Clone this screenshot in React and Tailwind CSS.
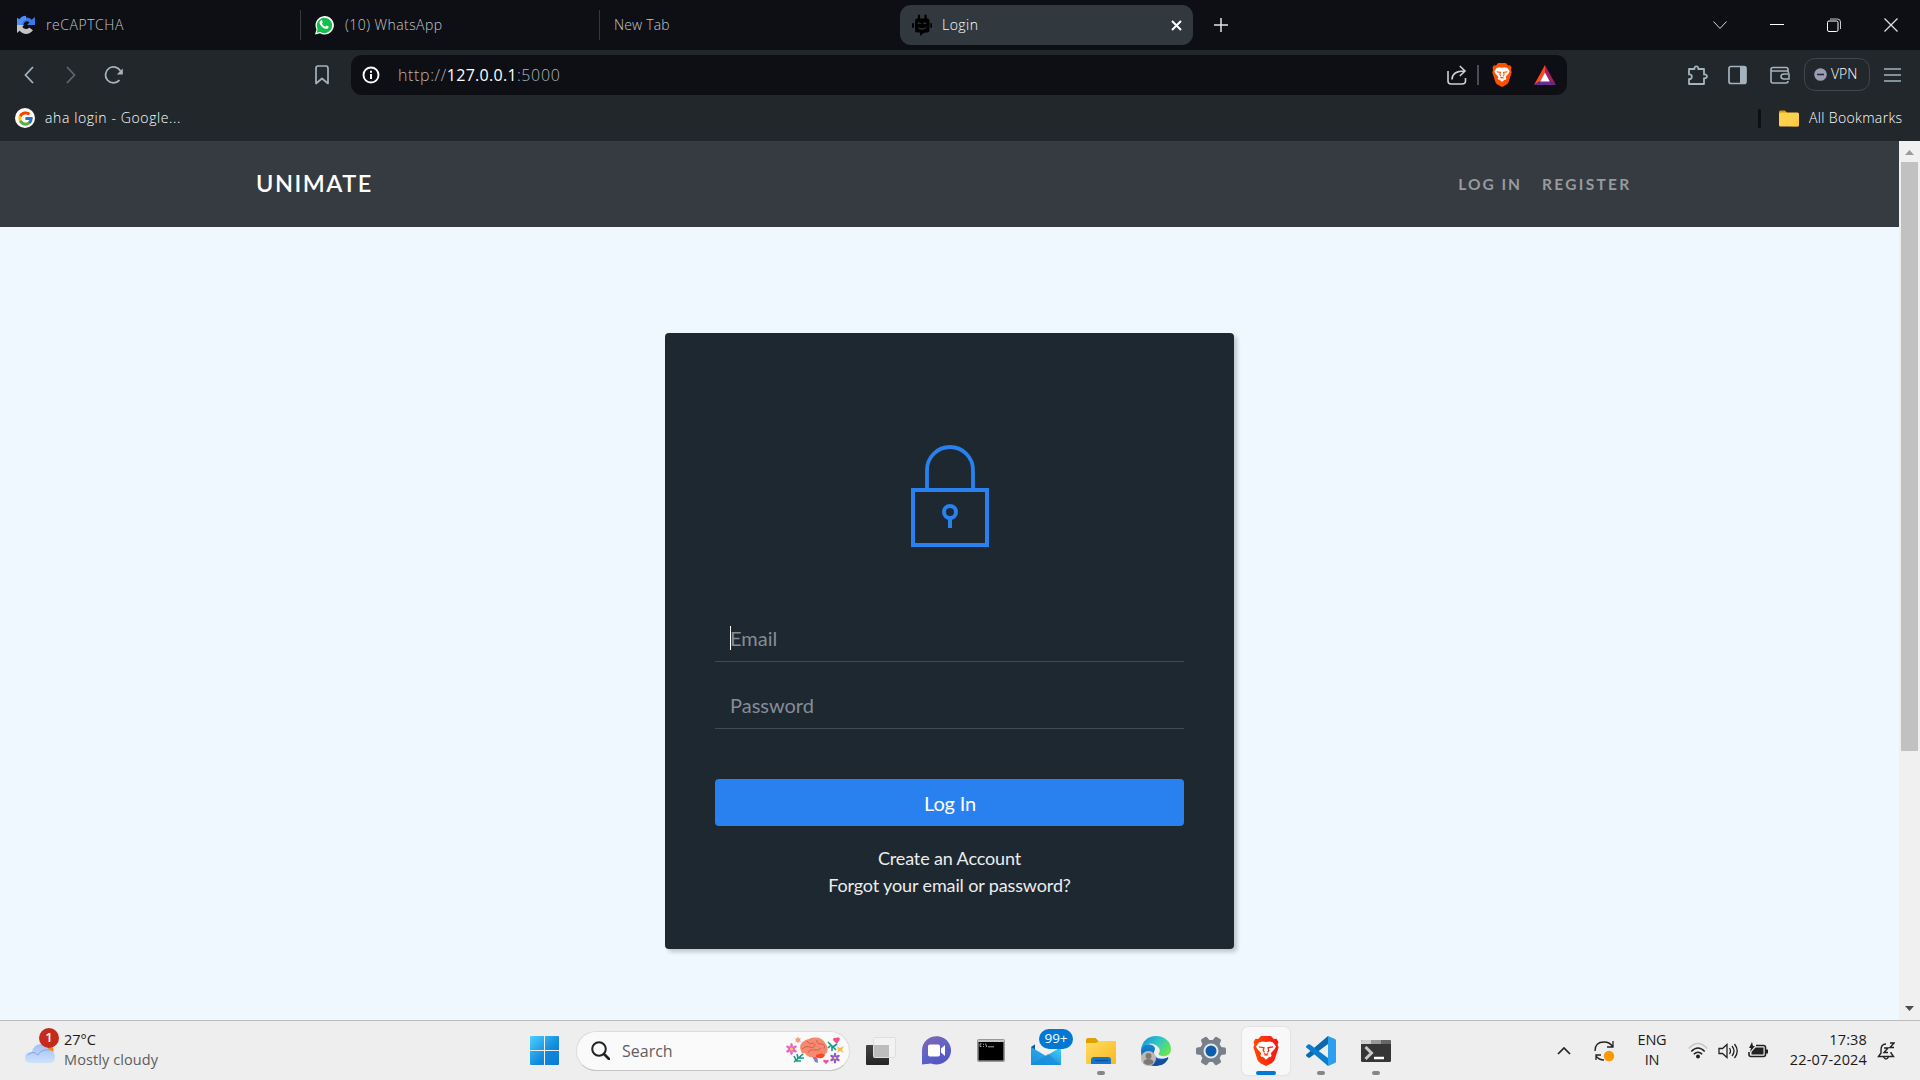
import React from "react";
import { FcGoogle } from "react-icons/fc";

function Svg({ w, h, className = "", children, ...rest }) {
  return (
    <svg width={w} height={h} viewBox={`0 0 ${w} ${h}`} fill="none" className={`shrink-0 ${className}`} {...rest}>
      {children}
    </svg>
  );
}

function TabBar() {
  return (
    <div className="flex h-[50px] items-center bg-[#0e0f14] text-[14px] font-light text-[#c4c6c9]">
      <div className="flex w-[300px] shrink-0 items-center">
        <Svg w={20} h={20} className="ml-4">
          <path d="M3 11A7 7 0 0 1 10 2.5c2.500 0 4.300.9 5.600 2.300L19 2v8h-8l2.400-2.500C11.500 5.500 8 6 7.500 10z" fill="#3b78e7" />
          <path d="M1 10.500V2.500l2.200 1.800C5 1.800 7.500.8 10 .8V5C7.500 5 6 7 6 9.500z" fill="#4a90f7" />
          <path d="M1 10h7L6.300 11.800C8 14.800 11.800 14.500 13.200 12.500L17 15.200C13.600 20 7 20 3.500 15.800L1 18z" fill="#c2c3c6" />
        </Svg>
        <span className="ml-[10px] whitespace-nowrap pb-[2px] tracking-[0.550px]">reCAPTCHA</span>
      </div>
      <div className="flex h-[30px] w-[299px] shrink-0 items-center border-l border-[#35373b]">
        <Svg w={20} h={20} className="ml-[13px]">
          <path d="M1 19.500l1.500-5A9.200 9.200 0 1 1 6 18.200z" fill="#fff" />
          <path d="M2.600 17.800l1.100-3.700A7.700 7.700 0 1 1 6.300 16.900z" fill="#12bf4c" />
          <path d="M6.700 5.400c.7-.7 1.200-.4 1.500.4l.6 1.400-.9 1.300c.8 1.500 1.900 2.500 3.400 3.200l1.200-1.200 2 1c.4.300-.1 1.500-.8 2-1 .7-2.500.3-4.200-.6-2-1.200-3.300-3-3.800-4.500-.4-1.300.2-2.300 1-3z" fill="#fff" />
        </Svg>
        <span className="ml-[11px] whitespace-nowrap pb-[2px] tracking-[0.450px]">(10) WhatsApp</span>
      </div>
      <div className="flex h-[30px] w-[301px] shrink-0 items-center border-l border-[#35373b]">
        <span className="ml-[14px] pb-[2px] tracking-[0.150px]">New Tab</span>
      </div>
      <div className="flex h-10 w-[293px] shrink-0 items-center rounded-[11px] bg-[#31393e] text-white">
        <Svg w={20} h={22} className="ml-3">
          <path d="M7 1.500v4M13.500 1.500v4" stroke="#000" strokeWidth="2.200" strokeLinecap="round" />
          <rect x="3" y="4.500" width="14.500" height="14" rx="2.500" fill="#000" />
          <rect x="0" y="9" width="2" height="5" rx="1" fill="#000" /><rect x="18.200" y="9" width="1.800" height="5" rx="1" fill="#000" />
          <path d="M8 18h5l-5 4z" fill="#000" />
          <path d="M6 10c.5-1.500 2-1.500 2.500 0M11.500 10c.5-1.500 2-1.500 2.500 0M6.500 13.500c1 2 6 2 7 0" stroke="#434a4e" strokeWidth="1" />
        </Svg>
        <span className="ml-[10px] w-[219px] pb-[2px] tracking-[0.450px]">Login</span>
        <Svg w={11} h={11} className="ml-[10px]"><path d="M1 1l9 9M10 1l-9 9" stroke="#fff" strokeWidth="2" /></Svg>
      </div>
      <Svg w={14} h={14} className="ml-[21px]"><path d="M7 0v14M0 7h14" stroke="#e2e3e5" strokeWidth="1.500" /></Svg>
      <div className="ml-auto flex items-center pr-[22px]">
        <Svg w={14} h={14} className="mr-[43px]"><path d="M.5 3.500L7 10.500l6.500-7" stroke="#d6d7d9" strokeWidth="1" /></Svg>
        <Svg w={14} h={14} className="mr-[43px]"><path d="M0 6.500h14" stroke="#fff" /></Svg>
        <Svg w={14} h={14} className="mr-[43px]"><rect x=".5" y="3" width="10.500" height="10.500" rx="1.500" stroke="#fff" /><path d="M3 1h7.500q3 0 3 3v7" stroke="#c9c9cb" strokeWidth="1" /></Svg>
        <Svg w={14} h={14}><path d="M.5.5l13 13M13.500.5l-13 13" stroke="#dedfe0" strokeWidth="1.300" /></Svg>
      </div>
    </div>
  );
}

function BatLogo() {
  return (
    <Svg w={22} h={20}>
      <path d="M11 0L0 20l6.500-4L11 8z" fill="#ff4724" />
      <path d="M11 0l11 20-6.500-4L11 8z" fill="#9e1f63" />
      <path d="M0 20h22l-6.500-4h-9z" fill="#662d91" />
      <path d="M11 7.500l4.800 9H6.200z" fill="#fff" />
    </Svg>
  );
}

function Toolbar() {
  return (
    <div className="flex h-[50px] items-center bg-[#22272b] text-[#a3b1ba]">
      <Svg w={10} h={18} className="ml-[24px]"><path d="M9 1L1.500 9 9 17" stroke="#a3b4be" strokeWidth="1.800" /></Svg>
      <Svg w={10} h={18} className="ml-8"><path d="M1 1l7.500 8L1 17" stroke="#5d666c" strokeWidth="1.800" /></Svg>
      <Svg w={20} h={20} className="ml-7">
        <path d="M15.500 15.200A8 8 0 1 1 16.500 6" stroke="#a3b4be" strokeWidth="1.800" />
        <path d="M18.800 3.500v6h-6z" fill="#a3b4be" />
      </Svg>
      <Svg w={14} h={20} className="ml-[191px]"><path d="M1 3.500Q1 1 3 1h8q2 0 2 2.500V18.500l-6-5-6 5z" stroke="#a3b4be" strokeWidth="1.700" strokeLinejoin="round" /></Svg>
      <div className="ml-[22px] flex h-10 w-[1216px] shrink-0 items-center rounded-[11px] bg-[#0e0f14]">
        <Svg w={18} h={18} className="ml-[11px]"><circle cx="9" cy="9" r="7.500" stroke="#fff" strokeWidth="1.900" /><path d="M9 8v5M9 4.800v1.900" stroke="#fff" strokeWidth="2" /></Svg>
        <span className="ml-[18px] w-[1049px] pb-px text-[16px] font-light tracking-[0.620px] text-[#b4b6b9]">http://<span className="font-normal tracking-[0.300px] text-white">127.0.0.1</span>:5000</span>
        <Svg w={20} h={20}>
          <path d="M1 6v10q0 3 3 3h11q3.500 0 3.500-3v-3" stroke="#cfd0d2" strokeWidth="1.600" />
          <path d="M5 14.500C5 8.500 9 6 17.500 6M12.800 1l5.200 5-5.200 5" stroke="#cfd0d2" strokeWidth="1.600" />
        </Svg>
        <div className="ml-[10px] h-5 w-[2px] bg-[#4b4d52]" />
        <div className="ml-[12px] mr-[21px] flex h-6 w-[22px] items-center justify-center">
          <BraveIcon small />
        </div>
        <BatLogo />
      </div>
      <Svg w={22} h={22} className="ml-[120px]">
        <path d="M2 5h5.500c-.8-3.500 4.500-3.500 3.700 0H17v5.500c4-.8 4 4.500 0 3.700V20H2v-5c3.800.8 3.800-5.500 0-4.500z" stroke="#a3b4be" strokeWidth="1.800" strokeLinejoin="round" />
      </Svg>
      <Svg w={20} h={20} className="ml-[19px]"><rect x="1" y="1.500" width="17" height="17" rx="2" stroke="#a3b4be" strokeWidth="1.700" /><path d="M12 2h6v16h-6z" fill="#a3b4be" /></Svg>
      <Svg w={21} h={20} className="ml-[22px]"><path d="M18 6.500V4.500q0-2-2-2H3q-2 0-2 2V16q0 2 2 2h13q2 0 2-2M1 6h16q1.500 0 1.500 2" stroke="#a3b4be" strokeWidth="1.600" /><path d="M19 9h-5q-3 0-3 2.500T14 14h5z" stroke="#a3b4be" strokeWidth="1.500" /></Svg>
      <div className="ml-[13px] flex h-[39px] w-[66px] shrink-0 items-start">
        <div className="mt-[2px] flex h-[33px] w-[66px] items-center rounded-[11px] border border-[#3f474c]">
          <Svg w={13} h={13} className="ml-[9px]"><circle cx="6.500" cy="6.500" r="6.300" fill="#9a9bb5" /><path d="M3 6.500h7" stroke="#22272b" strokeWidth="1.500" /></Svg>
          <span className="ml-[4px] pb-px text-[14px] font-light text-white">VPN</span>
        </div>
      </div>
      <Svg w={17} h={16} className="ml-[14px]"><path d="M0 2h17M0 8h17M0 14h17" stroke="#a3b4be" strokeWidth="1.600" /></Svg>
    </div>
  );
}

function BraveIcon({ small }) {
  const id = small ? "braveS" : "braveL";
  return (
    <svg width={small ? 20 : 26} height={small ? 24 : 30} viewBox="0 0 26 30" preserveAspectRatio="none">
      <defs>
        <linearGradient id={id} x1="0" x2="1">
          <stop offset="0" stopColor={small ? "#ff5000" : "#ff4a00"} />
          <stop offset="1" stopColor={small ? "#ff5000" : "#fb1414"} />
        </linearGradient>
      </defs>
      <path d="M8 0h10l2.800 3 2.700-.3L25.500 6l-.9 2.500 1 3L21.500 24q-1 2-3 3.300L13 30l-5.500-2.700q-2-1.300-3-3.300L.4 11.500l1-3L.5 6l2-3.300L5.200 3z" fill={`url(#${id})`} />
      <path d="M13 6l3.500-.6 3.500 1 3 4-1.200 2.400-4 4.400.8 2.400-1.200 1.600-3-1.700L13 19l-1.400.5-3 1.700-1.200-1.600.8-2.400-4-4.400L3 10.400l3-4 3.500-1zM9.500 20.500L13 19.500l3.500 1-3.500 3.300z" fill="#fff" />
      <path d="M6 10.800l5 1-.8 2.500 1.300 2M20 10.800l-5 1 .8 2.500-1.300 2M10.800 17.600L13 18.500l2.200-.9" fill="none" stroke={`url(#${id})`} strokeWidth="1.300" />
    </svg>
  );
}

function Bookmarks() {
  return (
    <div className="flex h-[41px] items-center bg-[#22272b] pb-[5px] text-[14px] font-light text-white">
      <div className="ml-[15px] flex h-5 w-5 items-center justify-center rounded-full bg-white"><FcGoogle size={17} /></div>
      <span className="ml-[10px] pb-px tracking-[0.600px]">aha login - Google...</span>
      <div className="ml-auto h-[19px] w-[3px] rounded-sm bg-[#0e0f14]" />
      <Svg w={20} h={17} className="ml-[18px]"><path d="M0 2Q0 .5 1.500.5H6L8 2.500v5H0z" fill="#d99b00" /><rect x="0" y="2.500" width="20" height="14" rx="1.500" fill="#ffd04d" /><path d="M12 16.500h6.500q1.500 0 1.500-1.500V8z" fill="#fbc02d" opacity=".5" /></Svg>
      <span className="ml-[10px] w-[111px] whitespace-nowrap pb-px tracking-[0.350px]">All Bookmarks</span>
    </div>
  );
}

function Field({ label, focused, className }) {
  return (
    <div className={`flex h-[47px] items-center border-b border-[#434a52] pl-[15px] text-[20px] text-[#858d96] ${className}`}>
      <div className="relative">
        {focused && <div className="absolute left-0 top-[3px] h-6 w-px bg-white" />}
        {label}
      </div>
    </div>
  );
}

function Page() {
  return (
    <div className="flex h-[879px] font-[Lato,sans-serif]">
      <div className="w-[1899px] shrink-0 bg-[#eff7ff]">
        <nav className="flex h-[86px] items-center bg-[#363a41] pl-[256px] pr-[265px]">
          <span className="text-[23.500px] font-semibold tracking-[1.500px] text-white">UNIMATE</span>
          <span className="ml-auto pt-[2px] text-[15.500px] font-bold tracking-[2px] text-[#989b9e]">LOG IN</span>
          <span className="ml-[20px] w-[92px] pt-[2px] text-[15.500px] font-bold tracking-[2.300px] text-[#989b9e]">REGISTER</span>
        </nav>
        <div className="ml-[665px] mt-[106px] flex h-[616px] w-[569px] flex-col rounded bg-[#1e2831] px-[50px] shadow-[3px_3px_4px_rgba(0,0,0,0.2)]">
          <Svg w={78} h={104} className="mx-auto mt-[112px]">
            <path d="M16 45V25a23 23 0 0 1 46 0v20" stroke="#2980ef" strokeWidth="3.800" />
            <rect x="2" y="45" width="74" height="55" stroke="#2980ef" strokeWidth="4" />
            <circle cx="39" cy="67" r="6" stroke="#2980ef" strokeWidth="4" />
            <path d="M39 73v10" stroke="#2980ef" strokeWidth="4" />
          </Svg>
          <Field label="Email" focused className="mt-[66px]" />
          <Field label="Password" className="mt-[20px]" />
          <div className="mt-[50px] flex h-[47px] items-center justify-center rounded bg-[#2980ef] pl-px text-[20px] tracking-[-0.200px] text-white">Log In</div>
          <div className="mt-[19px] text-center text-[18px] leading-[27px] tracking-[-0.130px] text-[#eceded]">
            <div>Create an Account</div>
            <div>Forgot your email or password?</div>
          </div>
        </div>
      </div>
      <div className="flex w-[21px] shrink-0 flex-col items-center bg-[#f0f0f0]">
        <Svg w={9} h={5} className="mt-[9px]"><path d="M0 5L4.500 0 9 5z" fill="#9b9b9b" /></Svg>
        <div className="mt-[7px] h-[589px] w-[17px] bg-[#c1c1c1]" />
        <Svg w={9} h={5} className="mt-auto mb-[9px]"><path d="M0 0l4.500 5L9 0z" fill="#4d4d4d" /></Svg>
      </div>
    </div>
  );
}

function Brain() {
  return (
    <Svg w={59} h={28}>
      <path d="M26 17q6 0 6 9l-3-1-3-6z" fill="#8a78c8" />
      <path d="M15 14C12 8 17 3 23 2c6-3 14-1 16 4 4 4 3 10 0 11-1 5-7 5-10 3-5 1-9-1-10-4-2 1-4 0-4-2z" fill="#f58a70" />
      <path d="M16 12q4-4 8-2t5-3M21 4q2 4 7 2M31 3q-1 4 4 4t3 5M22 16q1-4 6-3t7-2" stroke="#d85e4c" strokeWidth="1" />
      <path d="M30 18q6-3 9 0-2 5-9 2z" fill="#ff4422" />
      {[[5.500, 12, "#e765bf", 6], [49, 21, "#9057cf", 5.400], [12, 3, "#ef7e62", 3]].map(([x, y, c, r]) => (
        <g key={c} fill={c}>
          {[0, 60, 120, 180, 240, 300].map((a) => <ellipse key={a} cx={x} cy={y - r * 0.5} rx={r * 0.23} ry={r * 0.5} transform={`rotate(${a} ${x} ${y})`} />)}
          <circle cx={x} cy={y} r={r * 0.25} fill="#ffd24d" />
        </g>
      ))}
      <path d="M8 25l9-8M10 23l-2-4M12 21l-1-4M10 24h5M13 21h5M42 5l8 8M45 8l-3 3M47 10l4-3M46 9v5" stroke="#159a82" strokeWidth="1.600" />
      <path d="M51 7l-4-4q0-3 3-2 3-2 4 1z" fill="#f34f8c" />
      <path d="M40 27l-3-3q1-2 3-.5 2-1.500 3 .5z" fill="#f34f8c" />
      <path d="M51 9l3 2 4-2-2 4 2 3-4-2-3 2 1-3z" fill="#f2c049" />
    </Svg>
  );
}

function AppSlot({ children, dot, active }) {
  return (
    <div className={`relative mr-[7px] flex h-12 w-12 shrink-0 items-center justify-center rounded-md ${active ? "bg-[#f8f8f8] shadow-[0_0_1px_1px_#e3e3e3]" : ""}`}>
      {children}
      {dot && <div className="absolute bottom-0 left-5 h-1 w-2 rounded-full bg-[#868686]" />}
      {active && <div className="absolute bottom-0 left-[14px] h-1 w-5 rounded-full bg-[#0078d4]" />}
    </div>
  );
}

function TaskIcons() {
  return (
    <div className="flex items-center">
      <AppSlot>
        <Svg w={30} h={30}>
          <defs>
            <linearGradient id="tvA" y2="1" x2="0"><stop stopColor="#444" /><stop offset="1" stopColor="#252525" /></linearGradient>
          </defs>
          <rect x="0" y="9" width="23" height="20" rx="1" fill="url(#tvA)" />
          <rect x="7.500" y="1.500" width="22" height="20" rx="1" fill="#f2f2f2" stroke="#dedede" />
          <path d="M8 9h15v12H8z" fill="#bdbdbd" />
        </Svg>
      </AppSlot>
      <AppSlot>
        <Svg w={29} h={29}>
          <defs><linearGradient id="chat" x1="0" y1="0" x2=".6" y2="1"><stop stopColor="#8a63ab" /><stop offset=".5" stopColor="#6264c7" /><stop offset="1" stopColor="#5454c4" /></linearGradient></defs>
          <path d="M0 28.500V14.500A14.500 14.200 0 1 1 9 27.500z" fill="url(#chat)" />
          <rect x="6" y="8.500" width="12" height="12" rx="1.800" fill="#fff" /><path d="M19 12.500l4-3.500v11l-4-3.500z" fill="#fff" />
        </Svg>
      </AppSlot>
      <AppSlot>
        <Svg w={28} h={24}>
          <rect x=".5" y=".5" width="27" height="22" rx="1" fill="#c7c7c7" stroke="#999" /><rect x="1.500" y="3" width="25" height="18.500" fill="#000" />
          <path d="M4.500 4.800H3v2.700h1.500M6.500 4.800v1M6.500 7v1M8.500 4.500l1.200 3.500M11 7.800h6" stroke="#b5b5b5" strokeWidth=".9" />
        </Svg>
      </AppSlot>
      <AppSlot>
        <Svg w={30} h={30}>
          <defs><linearGradient id="mail" x1="0" y1="1" x2="1" y2="0"><stop stopColor="#168fdf" /><stop offset=".55" stopColor="#2ca4e5" /><stop offset="1" stopColor="#43d6fa" /></linearGradient></defs>
          <path d="M0 11L15 1l15 10v9H0z" fill="#0f5ba7" /><path d="M4 5h22v9l-11 7L4 14z" fill="#f1f1f1" />
          <path d="M0 11l15 9 15-9v18H0z" fill="url(#mail)" /><path d="M0 29l17-11 13 11z" fill="#1787d9" opacity=".6" />
        </Svg>
        <div className="absolute left-[17px] top-[2px] flex h-5 w-[34px] items-center justify-center rounded-full bg-[#0078d4] text-[13.500px] text-white">99+</div>
      </AppSlot>
      <AppSlot dot>
        <Svg w={30} h={30}>
          <defs><linearGradient id="fold" x1="0" y1="0" x2="1" y2="1"><stop stopColor="#ffdb65" /><stop offset="1" stopColor="#f9b91d" /></linearGradient></defs>
          <path d="M0 4q0-2 2-2h7.500l3 3V9H0z" fill="#dfa000" /><path d="M0 7h10l3-2h17v22q0 1-1 1H1q-1 0-1-1z" fill="url(#fold)" />
          <path d="M5 28v-4q0-3 3-3h14q3 0 3 3v4z" fill="#1276cf" /><path d="M9 24.500h13" stroke="#0b4d96" strokeWidth="1.200" />
        </Svg>
      </AppSlot>
      <AppSlot>
        <Svg w={30} h={30}>
          <defs>
            <linearGradient id="edgeA" x1="0" y1="0" x2="1" y2=".6"><stop stopColor="#1a88d0" /><stop offset=".5" stopColor="#2bc3cd" /><stop offset="1" stopColor="#68e554" /></linearGradient>
            <linearGradient id="edgeB" x1="0" y1="0" x2="0" y2="1"><stop stopColor="#1389d7" /><stop offset="1" stopColor="#0b4da2" /></linearGradient>
          </defs>
          <path d="M0 15C0 9 5 7.500 9 8.500c5 1 6 4 4 7-1 5 4 9 13 6.500C23 28 18 30 14 30 6 30 0 24 0 15z" fill="url(#edgeB)" />
          <path d="M14 24c4 1.500 9 0 13-3 1 1-1 4-3 6-3 2.500-7 3-10 2z" fill="#124f9f" />
          <path d="M0 14C1 5 7 0 15 0c9 0 15 6 15 13 0 5-4 8-9 7-3-.5-4-1.500-3-3 2-3 0-7-6-9C7 7 2 9 0 14z" fill="url(#edgeA)" />
          <circle cx="7.500" cy="22.500" r="7.500" fill="#bcb9b6" /><circle cx="7.500" cy="20" r="3" fill="#7d7976" /><path d="M2.500 27q0-4 5-4t5 4q-5 4-10 0z" fill="#7d7976" />
        </Svg>
      </AppSlot>
      <AppSlot>
        <Svg w={30} h={30}>
          <g fill="#78808a">
            <circle cx="15" cy="15" r="11" />
            {[0, 60, 120, 180, 240, 300].map((a) => <path key={a} d="M22 8l3 3 4 .5q1 .5 1 1.500v4q0 1-1 1.500l-4 .5-3 3z" transform={`rotate(${a} 15 15)`} />)}
          </g>
          <circle cx="15" cy="15" r="6.500" fill="#0d5fae" stroke="#e9e9e9" strokeWidth="2" />
        </Svg>
      </AppSlot>
      <AppSlot active><BraveIcon /></AppSlot>
      <AppSlot dot>
        <Svg w={30} h={30}>
          <path d="M22 0v8L4 21.500q-1 .7-2 0L.3 20q-.6-.8 0-1.500z" fill="#0b69ae" />
          <path d="M22 30v-8L4 8.500q-1-.7-2 0L.3 10q-.6.8 0 1.500z" fill="#0a7ecb" />
          <path d="M22 0l7 3q1 .5 1 1.500v21q0 1-1 1.500l-7 3z" fill="#2ba0ef" />
        </Svg>
      </AppSlot>
      <AppSlot dot>
        <Svg w={30} h={22}>
          <rect width="30" height="22" rx="1.500" fill="#363636" /><path d="M0 4V1.500Q0 0 1.500 0H10v4z" fill="#cfcfcf" /><path d="M10 0h10v4H10z" fill="#999" /><path d="M20 0h8.500Q30 0 30 1.500V4H20z" fill="#666" />
          <path d="M4.500 7l6 6-6 6" stroke="#c8c8c8" strokeWidth="3" /><path d="M13 18h10" stroke="#fff" strokeWidth="2.500" />
        </Svg>
      </AppSlot>
    </div>
  );
}

function Taskbar() {
  return (
    <div className="flex h-[60px] items-center border-t border-[#b9bbbd] bg-[#eeeeee] text-[14.500px] text-[#1b1b1b]">
      <div className="relative ml-[25px] h-10 w-[39px] shrink-0">
        <Svg w={31} h={40}>
          <defs><linearGradient id="cloud" y2="1" x2="0"><stop stopColor="#a3c0f3" /><stop offset="1" stopColor="#cfe2fb" /></linearGradient></defs>
          <circle cx="23" cy="19" r="5.500" fill="#f58518" />
          <path d="M6 32q-6 0-6-5.500T7 21q2-8 9-8 6 0 8 6 6 1 6 7t-6 6z" fill="url(#cloud)" /><path d="M3 24q5-5 10 0M13 24q3-6 11-5" stroke="#7ea5ea" strokeWidth="1" />
        </Svg>
        <div className="absolute left-[14px] top-[-3px] flex h-5 w-5 items-center justify-center rounded-full bg-[#c42b1c] text-[13px] font-semibold text-white">1</div>
      </div>
      <div className="w-[466px] shrink-0 pb-[2px] leading-5">
        <div>27°C</div>
        <div className="tracking-[0.100px] text-[#5c5c5c]">Mostly cloudy</div>
      </div>
      <Svg w={29} h={29}>
        <defs><linearGradient id="win" x1="0" y1="0" x2="1" y2="1"><stop stopColor="#4cd0ff" /><stop offset=".6" stopColor="#1189dd" /><stop offset="1" stopColor="#0b79d4" /></linearGradient></defs>
        <path d="M0 1q0-1 1-1h13v14H0zM15 0h13q1 0 1 1v13H15zM0 15h14v14H1q-1 0-1-1zM15 15h14v13q0 1-1 1H15z" fill="url(#win)" />
      </Svg>
      <div className="ml-[17px] mr-[7px] flex h-10 w-[274px] shrink-0 items-center rounded-full border border-[#dcdcdc] border-b-[#c4c4c4] bg-[#fafafa]">
        <Svg w={19} h={19} className="ml-[14px]"><circle cx="8" cy="8" r="6.800" stroke="#222" strokeWidth="2" /><path d="M13 13l5 5" stroke="#222" strokeWidth="2.600" strokeLinecap="round" /></Svg>
        <span className="ml-3 w-[164px] text-[16px] text-[#5e5e5e]">Search</span>
        <Brain />
      </div>
      <TaskIcons />
      <div className="ml-auto flex items-center pr-[25px]">
        <Svg w={14} h={8}><path d="M1 7l6-6 6 6" stroke="#222" strokeWidth="1.700" /></Svg>
        <Svg w={21} h={22} className="ml-[23px]"><path d="M1 11Q1 2 10 2q6 0 9 5M19 1v6h-6M2 20v-5h5M2 16q3 4 8 4" stroke="#222" strokeWidth="1.300" /><circle cx="15" cy="16" r="5.200" fill="#ff9800" /></Svg>
        <div className="ml-[22px] w-[30px] pb-px text-center text-[14.500px] leading-5 tracking-[-0.200px]">ENG<br />IN</div>
        <Svg w={20} h={18} className="ml-[21px]"><path d="M.7 6.500q9.300-10 18.600 0" stroke="#c6c6c6" strokeWidth="1.500" /><path d="M3.300 9.500q6.700-7 13.400 0M5.800 12.300q4.200-4.300 8.400 0" stroke="#222" strokeWidth="1.500" /><circle cx="10" cy="14.500" r="2" fill="#222" /></Svg>
        <Svg w={21} h={18} className="ml-[10px]"><path d="M1 6.500h3.500L9 2.500v13l-4.500-4H1zM11.500 6q2 3 0 6M14 4q4 5 0 10M16.500 2q5.500 7 0 14" stroke="#222" strokeWidth="1.300" /></Svg>
        <Svg w={21} h={18} className="ml-[9px]"><path d="M8 3.500h7.500q2 0 2 2v7q0 2-2 2H3q-2 0-2-2V10" stroke="#222" strokeWidth="1.600" /><path d="M18 7.500h2v4h-2z" fill="#222" /><path d="M7.500 5.500h8v7H3.500V10z" fill="#222" /><path d="M4 0l-3 6h2L2 10l5-6H5z" fill="#222" /></Svg>
        <div className="ml-[18px] w-[80px] whitespace-nowrap pb-[2px] text-right leading-5 tracking-[0.150px]">17:38<br />22-07-2024</div>
        <Svg w={18} h={20} className="ml-[10px]"><path d="M9 3Q4 3 4 9v3l-2.500 3.500h15L14 12v-1M6.500 16q2.500 4 5 0M7 7h4l-4 4.500h4M13 2h4l-4 4.500h4" stroke="#222" strokeWidth="1.400" /></Svg>
      </div>
    </div>
  );
}

export default function App() {
  return (
    <div className="h-[1080px] w-[1920px] overflow-hidden font-['Open_Sans','Noto_Sans',sans-serif]">
      <TabBar />
      <Toolbar />
      <Bookmarks />
      <Page />
      <Taskbar />
    </div>
  );
}
